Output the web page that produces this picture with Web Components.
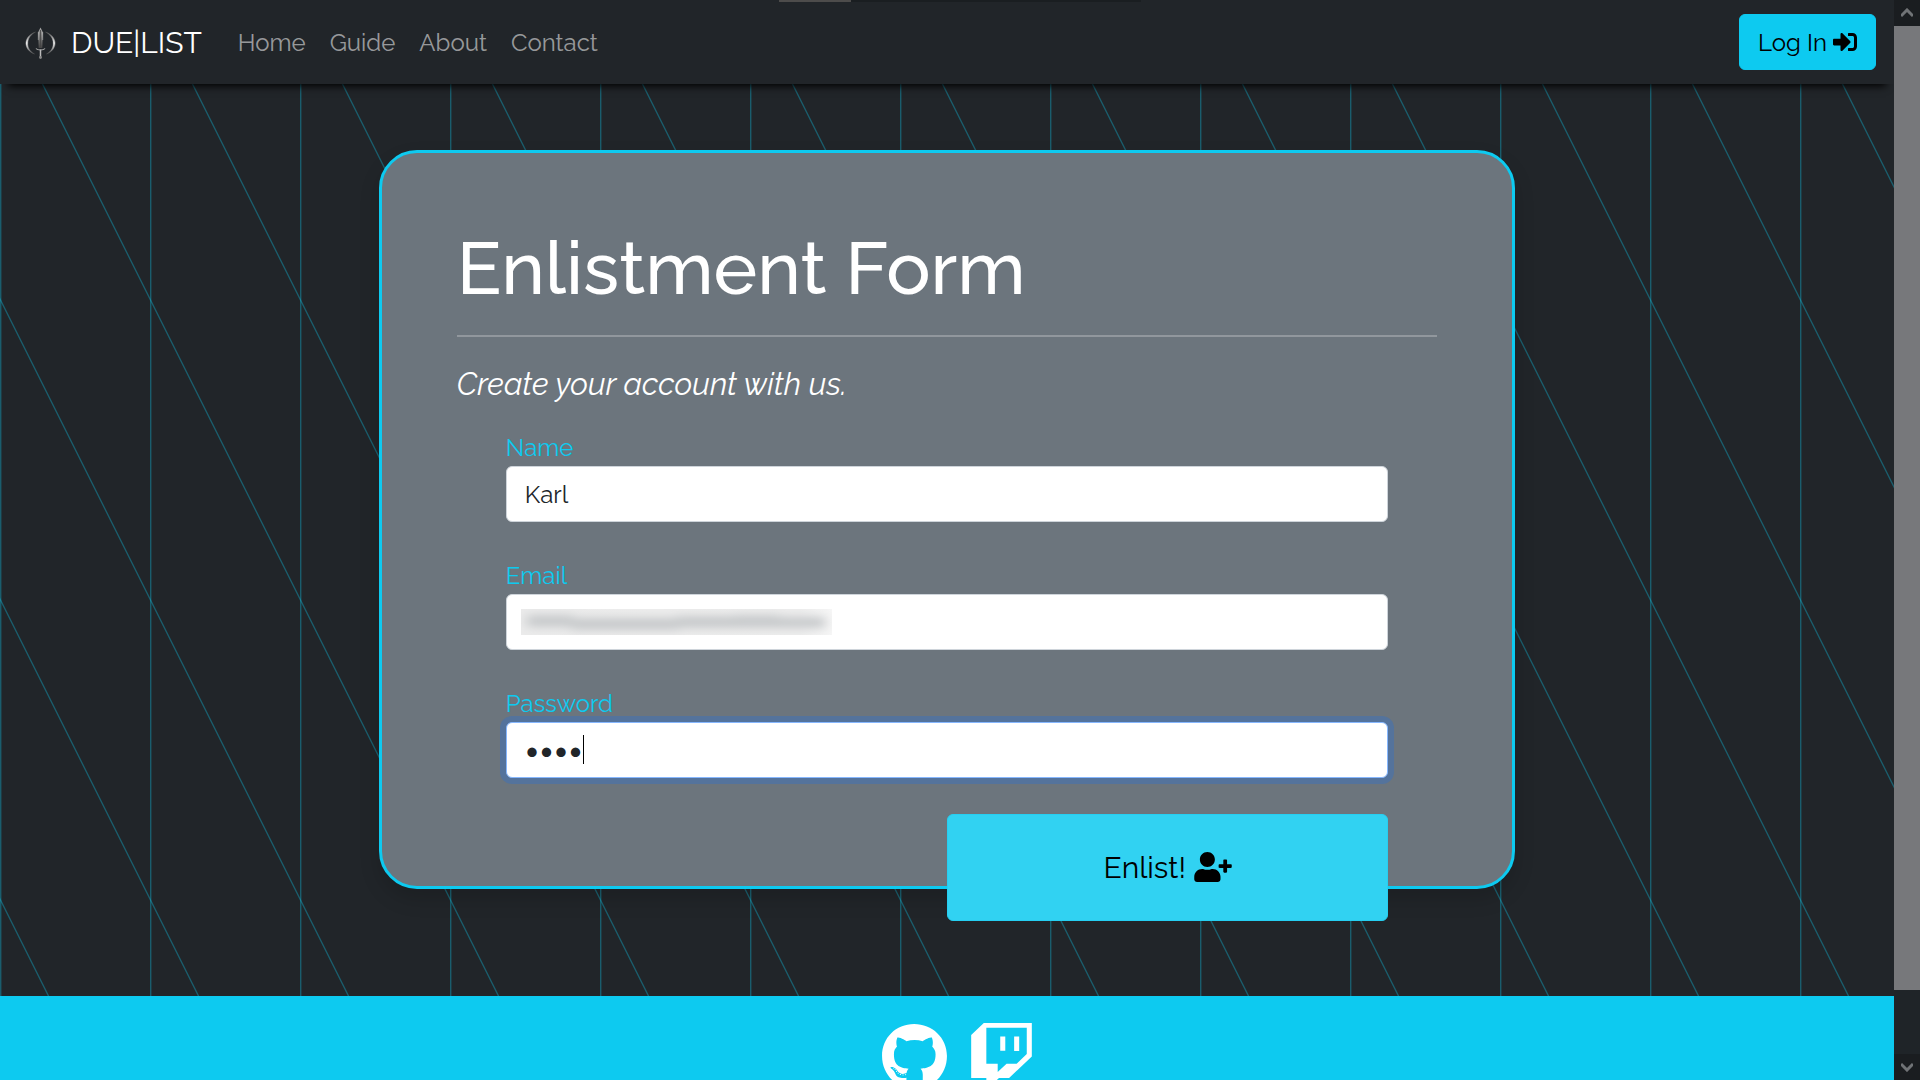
<!DOCTYPE html>
<html lang="en">
<head>
<meta charset="utf-8">
<title>DUE|LIST - Enlistment Form</title>
<style>
  html, body { margin: 0; height: 100%; }
  body {
    --info: #0dcaf0;
    --dark: #212529;
    --secondary: #6c757d;
    background: var(--dark);
    color: #fff;
    font: 400 24px/36px Raleway, "Open Sans", sans-serif;
    overflow: hidden;
  }
</style>
</head>
<body>
<duelist-app>
  <site-navbar slot="header">
    <nav-link href="#home">Home</nav-link>
    <nav-link href="#guide">Guide</nav-link>
    <nav-link href="#about">About</nav-link>
    <nav-link href="#contact">Contact</nav-link>
  </site-navbar>
  <enlist-card heading="Enlistment Form" lead="Create your account with us.">
    <form-field label="Name" type="text" value="Karl"></form-field>
    <form-field label="Email" type="email"><redacted-value></redacted-value></form-field>
    <form-field label="Password" type="password" value="duel" active><text-caret></text-caret></form-field>
    <enlist-button slot="action">Enlist!</enlist-button>
  </enlist-card>
  <site-footer slot="footer"></site-footer>
</duelist-app>

<script>
const define = (name, html, setup) => customElements.define(name, class extends HTMLElement {
  connectedCallback() {
    if (this.shadowRoot) return;
    const t = document.createElement('template');
    t.innerHTML = html;
    this.attachShadow({ mode: 'open' }).append(t.content.cloneNode(true));
    if (setup) setup(this, this.shadowRoot);
  }
});

/* Page frame: header, content and footer in one column, scrollbar beside it */
define('duelist-app', `
  <style>
    :host { display: grid; grid-template-columns: minmax(0, 1fr) 26px; height: 100vh; overflow: hidden; }
    .page { position: relative; display: flex; flex-direction: column; overflow: hidden; }
    .page > *, .page > ::slotted(*) { flex: none; }
    main { position: relative; padding: 66px 0 107px; }
    .tab-strip { position: absolute; z-index: 3; top: 0; left: 50%; width: 362px; height: 2px; margin-left: -168px;
      background: linear-gradient(90deg, #4d4c4b 72px, #1a1e21 72px); }
  </style>
  <div class="page">
    <line-backdrop></line-backdrop>
    <slot name="header"></slot>
    <main><slot></slot></main>
    <slot name="footer"></slot>
    <div class="tab-strip"></div>
  </div>
  <page-scrollbar></page-scrollbar>
`);

define('line-backdrop', `
  <style>
    :host { display: block; position: absolute; inset: 0; }
    svg { display: block; width: 100%; height: 100%; }
  </style>
  <svg aria-hidden="true">
    <defs>
      <pattern id="lines" width="150" height="300" patternUnits="userSpaceOnUse">
        <g fill="none" stroke="#0dcaf0" stroke-opacity=".34">
          <path d="M.7 0V300" stroke-width="1.4"/>
          <path d="M-10 -21L160 319M-10 279L10 319M140 -21L160 19" stroke-width="1.3"/>
        </g>
      </pattern>
    </defs>
    <rect width="100%" height="100%" fill="url(#lines)"/>
  </svg>
`);

define('site-navbar', `
  <style>
    :host { display: flex; align-items: center; box-sizing: border-box; height: 84px; padding: 0 18px;
      position: relative; z-index: 1; background: var(--dark); box-shadow: 0 10px 8px -8px #000; }
    .brand { display: flex; align-items: center; gap: 8px; margin-right: 36px; color: #fff; font-size: 30px;
      line-height: 45px; text-decoration: none; }
    .brand svg { width: 45px; height: 45px; }
    nav { display: flex; gap: 24px; padding-top: 2px; }
    login-button { margin-left: auto; }
  </style>
  <a class="brand" href="#">
    <svg viewBox="0 0 45 45" aria-hidden="true">
      <defs>
        <linearGradient id="blade" x2="0" y2="1">
          <stop offset="0" stop-color="#aaa"/><stop offset=".5" stop-color="#777"/><stop offset="1" stop-color="#444"/>
        </linearGradient>
        <linearGradient id="ring" x2="0" y2="1">
          <stop offset="0" stop-color="#555"/><stop offset=".5" stop-color="#eee"/><stop offset="1" stop-color="#555"/>
        </linearGradient>
      </defs>
      <path d="M17.500 12C5 16 5 30 16.500 34C7 29 7.500 17 17.500 12ZM27.500 12C40 16 40 30 28.500 34C38 29 37.500 17 27.500 12Z" fill="url(#ring)" stroke="url(#ring)" stroke-width=".4"/>
      <path d="M22.500 7.500L25 12.500L24.300 28H20.700L20 12.500Z" fill="url(#blade)"/>
      <path d="M22.500 10V27" stroke="#444" stroke-width=".8"/>
      <path d="M20.300 12V20M24.700 12V20" stroke="#ccc" stroke-width=".5"/>
      <path d="M18 28.500C19.500 30.500 25.500 30.500 27 28.500" fill="none" stroke="#aaa" stroke-width="1.200"/>
      <path d="M22.500 29.500V37" stroke="#bbb" stroke-width="1.500"/>
      <circle cx="22.500" cy="37.500" r="1.400" fill="#888"/>
    </svg>
    <span>DUE|LIST</span>
  </a>
  <nav><slot></slot></nav>
  <login-button>Log In</login-button>
`);

define('nav-link', `
  <style>
    :host { display: block; }
    a { color: rgba(255,255,255,.55); text-decoration: none; }
  </style>
  <a><slot></slot></a>
`, (el, root) => { root.querySelector('a').href = el.getAttribute('href'); });

define('login-button', `
  <style>
    :host { display: block; }
    button { display: block; padding: 10px 18px 8px; border: 1px solid var(--info); border-radius: 6px;
      background: var(--info); color: #000; font: inherit; }
    svg { width: 24px; height: 24px; vertical-align: -3px; }
  </style>
  <button type="button"><slot></slot> <svg viewBox="0 0 512 512" aria-hidden="true"><path d="M416 448h-84c-6.600 0-12-5.400-12-12v-40c0-6.600 5.400-12 12-12h84c17.700 0 32-14.300 32-32V160c0-17.700-14.300-32-32-32h-84c-6.600 0-12-5.400-12-12V76c0-6.600 5.400-12 12-12h84c53 0 96 43 96 96v192c0 53-43 96-96 96zm-47-209L201 71c-15-15-41-4.500-41 17v96H24c-13.300 0-24 10.700-24 24v96c0 13.300 10.700 24 24 24h136v96c0 21.500 26 32 41 17l168-168c9.300-9.400 9.300-24.600 0-34z"/></svg></button>
`);

define('enlist-card', `
  <style>
    :host { display: block; box-sizing: border-box; width: 60%; margin: 0 auto; padding: 71px 75px 0;
      border: 3px solid var(--info); border-radius: 38px; background: var(--secondary);
      box-shadow: 0 10px 20px rgba(0,0,0,.15); }
    h1 { margin: 0; font-size: 74px; line-height: 88px; font-weight: 500; }
    hr { height: 2px; margin: 23px 0 24px; border: 0; background: #fff; opacity: .25; }
    p { margin: 0 0 23px; font-size: 31px; line-height: 46px; font-style: italic; }
    form { display: flex; flex-direction: column; gap: 36px; margin: 0 5%; }
    .action { display: flex; justify-content: flex-end; margin-bottom: -35px; }
  </style>
  <h1></h1>
  <hr>
  <p></p>
  <form>
    <slot></slot>
    <div class="action"><slot name="action"></slot></div>
  </form>
`, (el, root) => {
  root.querySelector('h1').textContent = el.getAttribute('heading');
  root.querySelector('p').textContent = el.getAttribute('lead');
});

define('form-field', `
  <style>
    :host { display: block; }
    label { display: block; color: var(--info); }
    .control { position: relative; }
    input { display: block; box-sizing: border-box; width: 100%; height: 56px; padding: 9px 18px;
      border: 1px solid #ced4da; border-radius: 6px; outline: 0; background: #fff; color: var(--dark); font: inherit; }
    input[type=password] { font-family: Lato, sans-serif; font-size: 25px; }
    :host([active]) input { border-color: #86b7fe; box-shadow: 0 0 0 6px rgba(13,110,253,.25); }
  </style>
  <label for="field"></label>
  <div class="control"><input id="field"><slot></slot></div>
`, (el, root) => {
  root.querySelector('label').textContent = el.getAttribute('label');
  const input = root.querySelector('input');
  input.type = el.getAttribute('type');
  input.value = el.getAttribute('value') || '';
});

/* Blurred-out address lying over the email box */
define('redacted-value', `
  <style>
    :host { display: block; position: absolute; left: 15px; top: 15px; width: 311px; height: 26px;
      overflow: hidden; background: linear-gradient(90deg, #ebebeb, #ededed 90%, #f6f6f6); }
    svg { display: block; width: 100%; height: 100%; }
  </style>
  <svg viewBox="0 0 311 26" aria-hidden="true">
    <defs><filter id="soft" x="-10%" y="-80%" width="120%" height="260%"><feGaussianBlur stdDeviation="6 4"/></filter></defs>
    <g filter="url(#soft)" fill="#c8cacc">
      <rect x="6" y="6" width="46" height="12"/>
      <rect x="50" y="9" width="64" height="12"/>
      <rect x="112" y="9" width="46" height="12"/>
      <rect x="156" y="7" width="60" height="12"/>
      <rect x="214" y="6" width="44" height="13"/>
      <rect x="258" y="8" width="46" height="11"/>
    </g>
  </svg>
`);

define('text-caret', `
  <style>:host { display: block; position: absolute; left: 77px; top: 13px; width: 1px; height: 29px; background: #000; }</style>
`);

define('enlist-button', `
  <style>
    :host { display: block; width: 50%; }
    button { display: block; width: 100%; padding: 30px 18px; border: 1px solid #25cff2; border-radius: 6px;
      background: #31d2f2; color: #000; font: inherit; font-size: 30px; line-height: 45px; }
    svg { width: 38px; height: 30px; vertical-align: -4px; }
  </style>
  <button type="submit"><slot></slot> <svg viewBox="0 0 640 512" aria-hidden="true"><path d="M624 208h-64v-64c0-8.800-7.200-16-16-16h-32c-8.800 0-16 7.200-16 16v64h-64c-8.800 0-16 7.200-16 16v32c0 8.800 7.200 16 16 16h64v64c0 8.800 7.200 16 16 16h32c8.800 0 16-7.200 16-16v-64h64c8.800 0 16-7.200 16-16v-32c0-8.800-7.200-16-16-16zm-400 48c70.700 0 128-57.300 128-128S294.700 0 224 0 96 57.300 96 128s57.300 128 128 128zm89.600 32h-16.700c-22.200 10.200-46.900 16-72.900 16s-50.600-5.800-72.900-16h-16.700C60.200 288 0 348.200 0 422.400V464c0 26.500 21.500 48 48 48h352c26.500 0 48-21.500 48-48v-41.600c0-74.200-60.200-134.400-134.400-134.400z"/></svg></button>
`);

define('site-footer', `
  <style>
    :host { display: flex; justify-content: center; gap: 21px; padding: 27px 0 27px 22px; position: relative;
      background: var(--info); color: #fff; }
    a { display: block; color: inherit; }
    svg { display: block; height: 67px; fill: currentColor; }
    .github { width: 65px; }
    .twitch { width: 67px; }
  </style>
  <a href="#github" aria-label="GitHub"><svg class="github" viewBox="0 0 496 512"><path d="M165.900 397.400c0 2-2.300 3.600-5.200 3.600-3.300.3-5.600-1.300-5.600-3.600 0-2 2.300-3.600 5.200-3.600 3-.3 5.600 1.300 5.600 3.600zm-31.100-4.500c-.7 2 1.300 4.300 4.300 4.900 2.600 1 5.600 0 6.200-2s-1.300-4.300-4.300-5.200c-2.600-.7-5.500.3-6.200 2.300zm44.200-1.700c-2.900.7-4.900 2.600-4.600 4.900.3 2 2.900 3.300 5.900 2.600 2.900-.7 4.900-2.600 4.600-4.600-.3-1.900-3-3.200-5.900-2.900zM244.800 8C106.100 8 0 113.300 0 252c0 110.900 69.800 205.800 169.500 239.200 12.800 2.300 17.300-5.600 17.300-12.100 0-6.200-.3-40.400-.3-61.400 0 0-70 15-84.700-29.800 0 0-11.400-29.100-27.800-36.600 0 0-22.900-15.700 1.600-15.400 0 0 24.900 2 38.600 25.800 21.900 38.600 58.600 27.500 72.900 20.900 2.300-16 8.800-27.100 16-33.700-55.900-6.200-112.300-14.300-112.300-110.500 0-27.500 7.600-41.300 23.600-58.900-2.600-6.500-11.100-33.300 2.600-67.900 20.900-6.500 69 27 69 27 20-5.600 41.500-8.500 62.800-8.500s42.800 2.900 62.800 8.500c0 0 48.100-33.600 69-27 13.700 34.700 5.200 61.400 2.600 67.900 16 17.700 25.800 31.500 25.800 58.900 0 96.500-58.900 104.200-114.800 110.500 9.200 7.900 17 22.900 17 46.400 0 33.700-.3 75.400-.3 83.600 0 6.500 4.600 14.400 17.300 12.100C428.200 457.800 496 362.900 496 252 496 113.300 383.500 8 244.800 8zM97.200 352.900c-1.300 1-1 3.300.7 5.200 1.600 1.600 3.900 2.300 5.200 1 1.300-1 1-3.300-.7-5.200-1.600-1.600-3.900-2.300-5.200-1zm-10.800-8.100c-.7 1.300.3 2.900 2.300 3.900 1.600 1 3.600.7 4.300-.7.7-1.300-.3-2.900-2.300-3.900-2-.6-3.600-.3-4.300.7zm32.400 35.600c-1.600 1.300-1 4.300 1.300 6.200 2.300 2.300 5.200 2.600 6.500 1 1.300-1.300.7-4.300-1.300-6.200-2.200-2.300-5.200-2.600-6.500-1zm-11.400-14.700c-1.600 1-1.600 3.600 0 5.900 1.600 2.300 4.300 3.300 5.600 2.300 1.600-1.300 1.600-3.900 0-6.200-1.400-2.300-4-3.300-5.600-2z"/></svg></a>
  <a href="#twitch" aria-label="Twitch"><svg class="twitch" viewBox="0 0 512 512"><path d="M391.170 103.470H352.540v109.700h38.630ZM285 103H246.370V212.750H285ZM120.830 0 24.310 91.420V420.580H140.140V512l96.530-91.420h77.250L487.690 256V0ZM449.070 237.750l-77.220 73.120H294.610l-67.600 64v-64H140.140V36.580H449.070Z"/></svg></a>
`);

define('page-scrollbar', `
  <style>
    :host { display: flex; flex-direction: column; background: #1f2428; }
    .end { display: grid; place-items: center; height: 26px; background: #1a1d20; }
    .track { flex: 1; }
    .thumb { height: 93.8%; background: #77787b; }
    svg { width: 12px; height: 10px; fill: none; stroke: #707376; stroke-width: 3; }
  </style>
  <div class="end"><svg viewBox="0 0 12 10" aria-hidden="true"><path d="M0 8L6 2L12 8"/></svg></div>
  <div class="track"><div class="thumb"></div></div>
  <div class="end"><svg viewBox="0 0 12 10" aria-hidden="true"><path d="M0 2L6 8L12 2"/></svg></div>
`);
</script>
</body>
</html>
